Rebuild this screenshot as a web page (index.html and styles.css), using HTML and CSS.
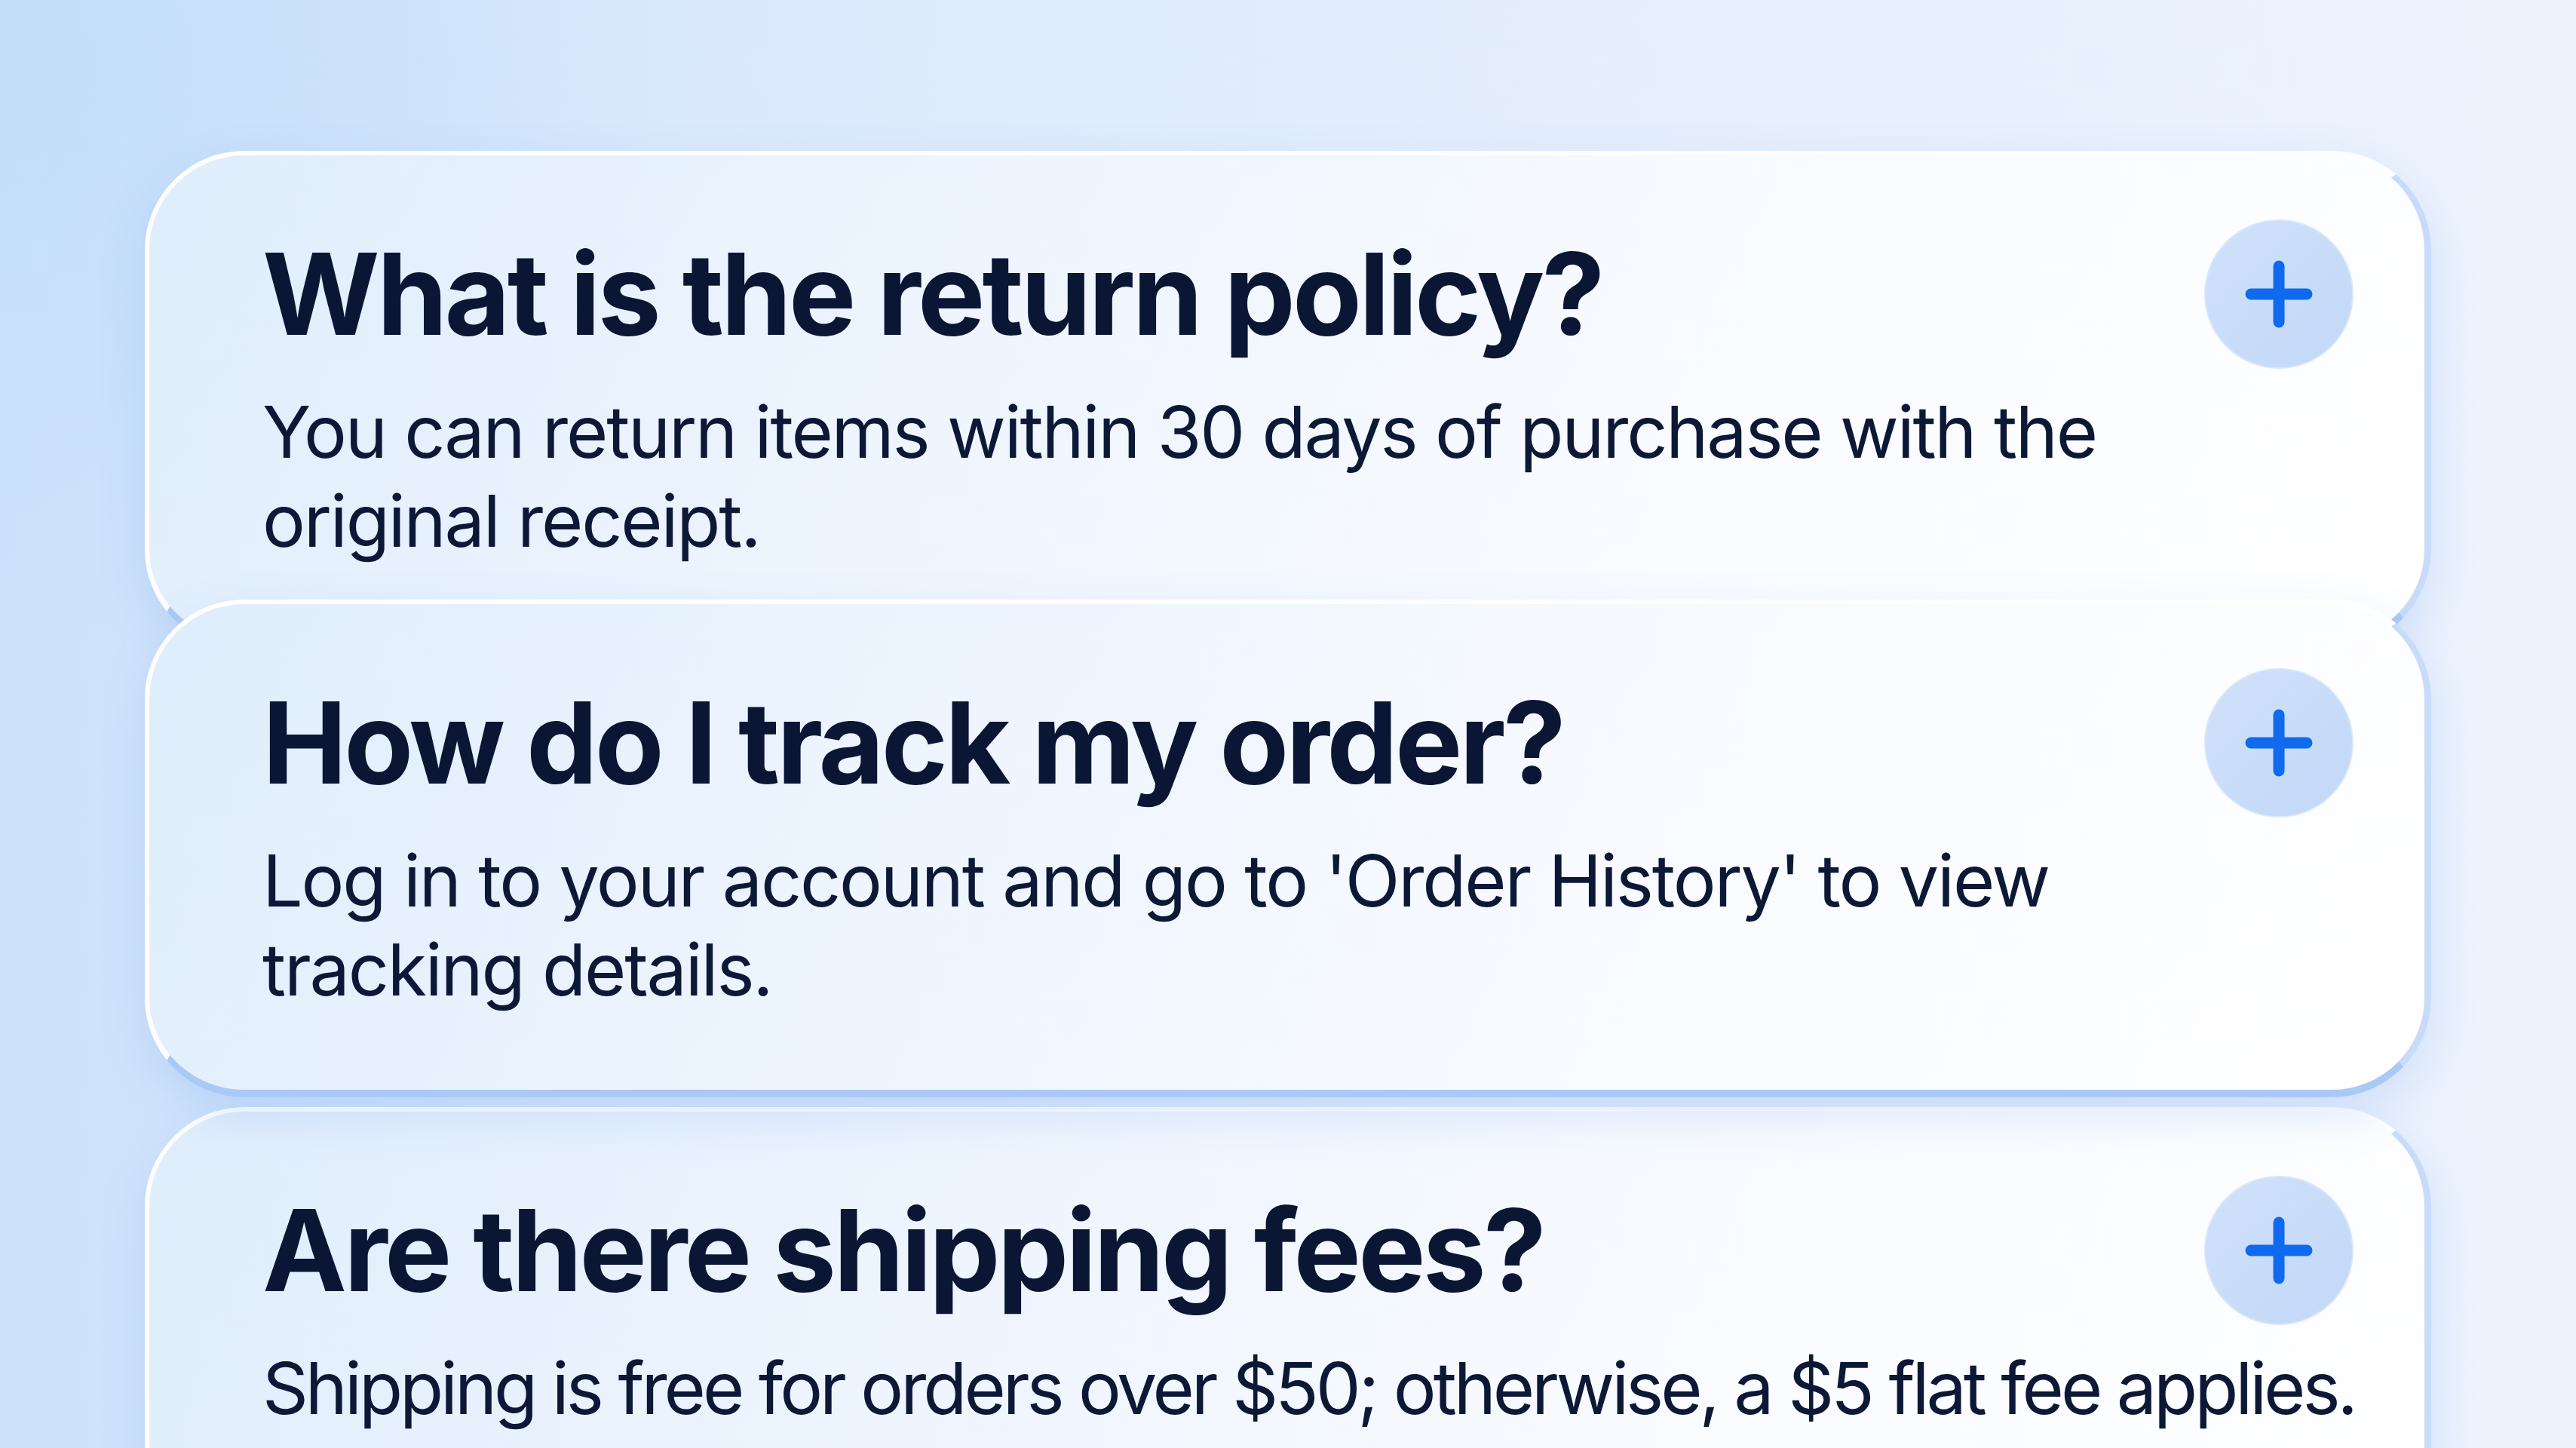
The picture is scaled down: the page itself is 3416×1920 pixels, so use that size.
FILE: index.html
```html
<!DOCTYPE html>
<html lang="en">
<head>
<meta charset="utf-8">
<title>FAQ</title>
<link rel="stylesheet" href="styles.css">
</head>
<body>
<main class="faq">
  <section class="card card-1">
    <div class="card-head">
      <h2 class="question">What is the return policy?</h2>
      <button class="toggle" aria-label="Expand">
        <svg viewBox="0 0 90 90" width="90" height="90"><path d="M45 8V82M8 45H82" stroke="#0f6af0" stroke-width="15" stroke-linecap="round" fill="none"/></svg>
      </button>
    </div>
    <p class="answer">You can return items within 30 days of purchase with the original receipt.</p>
  </section>
  <section class="card card-2">
    <div class="card-head">
      <h2 class="question">How do I track my order?</h2>
      <button class="toggle" aria-label="Expand">
        <svg viewBox="0 0 90 90" width="90" height="90"><path d="M45 8V82M8 45H82" stroke="#0f6af0" stroke-width="15" stroke-linecap="round" fill="none"/></svg>
      </button>
    </div>
    <p class="answer">Log in to your account and go to 'Order History' to view tracking details.</p>
  </section>
  <section class="card card-3">
    <div class="card-head">
      <h2 class="question">Are there shipping fees?</h2>
      <button class="toggle" aria-label="Expand">
        <svg viewBox="0 0 90 90" width="90" height="90"><path d="M45 8V82M8 45H82" stroke="#0f6af0" stroke-width="15" stroke-linecap="round" fill="none"/></svg>
      </button>
    </div>
    <p class="answer answer-single">Shipping is free for orders over $50; otherwise, a $5 flat fee applies.</p>
  </section>
</main>
</body>
</html>
```
FILE: styles.css
```css
html, body {
  margin: 0;
  padding: 0;
  height: 100%;
  overflow: hidden;
}
body {
  font-family: Inter, "Noto Sans", "Liberation Sans", sans-serif;
  background:
    radial-gradient(ellipse 1300px 1100px at 0% 5%, rgba(194, 221, 250, 0.85), rgba(194, 221, 250, 0) 70%),
    linear-gradient(90deg, #cde2fb 0%, #d9e9fc 25%, #e4eefd 60%, #edf3fd 100%);
  color: #0a1633;
}
.faq {
  display: flex;
  flex-direction: column;
  padding: 200px 192px 0 192px;
}
.card {
  position: relative;
  box-sizing: border-box;
  height: 660px;
  border-radius: 132px;
  border-style: solid;
  border-width: 6px 9px 10px 6px;
  border-color: rgba(255, 255, 255, 0.95) rgba(198, 219, 249, 0.95) #abc9f6 rgba(255, 255, 255, 0.9);
  background: linear-gradient(115deg, #dfedfc 0%, #eef5fe 36%, #f9fbff 68%, #ffffff 100%);
  box-shadow: 0 24px 60px rgba(110, 160, 235, 0.22);
  padding: 85px 94px 0 150px;
}
.card-1 { z-index: 1; }
.card-2 { z-index: 3; margin-top: -65px; }
.card-3 { z-index: 2; margin-top: 13px; }
.card-head {
  display: flex;
  align-items: center;
  justify-content: space-between;
}
.question {
  margin: 0;
  font-size: 150px;
  line-height: 180px;
  font-weight: 700;
  letter-spacing: -0.025em;
  color: #0a1633;
}
.toggle {
  flex: none;
  width: 198px;
  height: 198px;
  border-radius: 50%;
  border: 2px solid rgba(218, 231, 252, 0.95);
  background: linear-gradient(135deg, #d0e1fa 0%, #c2d8f8 100%);
  display: flex;
  align-items: center;
  justify-content: center;
  padding: 0;
}
.toggle svg { display: block; }
.answer {
  margin: 25px 0 0 0;
  max-width: 2620px;
  font-size: 95px;
  line-height: 118px;
  font-weight: 400;
  letter-spacing: -0.023em;
  color: #0d1836;
}
.answer-single {
  max-width: none;
  white-space: nowrap;
  letter-spacing: -0.043em;
}
```
